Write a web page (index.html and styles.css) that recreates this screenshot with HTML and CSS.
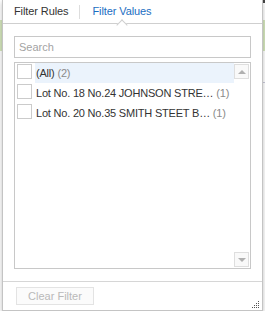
FILE: index.html
```html
<!DOCTYPE html>
<html lang="en">
  <head>
    <meta charset="UTF-8" />
    <meta name="viewport" content="width=device-width, initial-scale=1.0" />
    <title>Filter</title>
    <link rel="stylesheet" href="styles.css">
  </head>
  <body>
    <div class="filter-popup">
      <div class="filter-tabs">
        <span class="tab">Filter Rules</span>
        <span class="tab-divider"></span>
        <span class="tab tab-active">Filter Values<span class="tab-caret"></span></span>
      </div>
      <div class="filter-body">
        <input class="search-box" type="text" placeholder="Search" />
        <div class="value-list">
          <div class="value-rows">
            <div class="value-row">
              <span class="check"></span>
              <span class="value-label selected">(All) <span class="count">(2)</span></span>
            </div>
            <div class="value-row">
              <span class="check"></span>
              <span class="value-label">Lot No. 18 No.24 JOHNSON STRE… <span class="count">(1)</span></span>
            </div>
            <div class="value-row">
              <span class="check"></span>
              <span class="value-label">Lot No. 20 No.35 SMITH STEET B… <span class="count">(1)</span></span>
            </div>
          </div>
          <div class="scrollbar">
            <span class="scroll-btn"><span class="arrow-up"></span></span>
            <span class="scroll-btn"><span class="arrow-down"></span></span>
          </div>
        </div>
      </div>
      <div class="filter-footer">
        <button class="clear-btn" disabled>Clear Filter</button>
      </div>
      <svg class="grip" width="8" height="8" viewBox="0 0 8 8">
        <rect x="6" y="0" width="1" height="1" />
        <rect x="4" y="2" width="1" height="1" />
        <rect x="6" y="2" width="1" height="1" />
        <rect x="2" y="4" width="1" height="1" />
        <rect x="4" y="4" width="1" height="1" />
        <rect x="6" y="4" width="1" height="1" />
        <rect x="0" y="6" width="1" height="1" />
        <rect x="2" y="6" width="1" height="1" />
        <rect x="4" y="6" width="1" height="1" />
        <rect x="6" y="6" width="1" height="1" />
      </svg>
    </div>
  </body>
</html>
```

FILE: styles.css
```css
* {
  box-sizing: border-box;
  margin: 0;
  padding: 0;
}

body {
  font-family: "Liberation Sans", Arial, sans-serif;
  font-size: 11px;
  color: #333333;
  background:
    linear-gradient(#d5e7bd, #d5e7bd) right 0 top 20px / 3px 31px no-repeat,
    linear-gradient(#c9c9d9, #c9c9d9) right 0 top 82px / 3px 1px no-repeat,
    linear-gradient(#454545, #454545) right 0 top 0 / 7px 3px no-repeat,
    linear-gradient(#d5e7bd, #d5e7bd) left 0 top 20px / 2px 31px no-repeat,
    #ffffff;
}

.filter-popup {
  position: relative;
  width: 261px;
  height: 311px;
  margin-left: 2px;
  background: #ffffff;
  border: 1px solid #c4c4c4;
  border-top: none;
  box-shadow: 0 2px 5px rgba(0, 0, 0, 0.25);
  display: flex;
  flex-direction: column;
}

.filter-tabs {
  height: 24px;
  border-bottom: 1px solid #cfcfcf;
  display: flex;
  align-items: center;
  padding-left: 11px;
}

.tab {
  position: relative;
  line-height: 23px;
  color: #333333;
  letter-spacing: -0.1px;
}

.tab-active {
  color: #1b6ec2;
}

.tab-divider {
  width: 1px;
  height: 14px;
  background: #dddddd;
  margin: 0 12px 0 11px;
}

.tab-caret {
  position: absolute;
  top: 21px;
  left: calc(50% - 4px);
  width: 8px;
  height: 8px;
  background: #ffffff;
  border-left: 1px solid #cfcfcf;
  border-top: 1px solid #cfcfcf;
  transform: rotate(45deg);
}

.filter-body {
  padding: 12px 11px 0;
}

.search-box {
  display: block;
  width: 237px;
  height: 22px;
  padding: 0 4px;
  border: 1px solid #c8c8c8;
  font-family: inherit;
  font-size: 11px;
  color: #333333;
  outline: none;
}

.search-box::placeholder {
  color: #a3a3a3;
}

.value-list {
  margin-top: 4px;
  width: 237px;
  height: 207px;
  border: 1px solid #c8c8c8;
  display: flex;
}

.value-rows {
  flex: 1;
  min-width: 0;
}

.value-row {
  height: 20px;
  display: flex;
  align-items: flex-start;
}

.check {
  width: 15px;
  height: 15px;
  margin: 1px 3px 0 2px;
  border: 1px solid #cbcbcb;
  background: #ffffff;
  flex: none;
}

.value-label {
  flex: 1;
  line-height: 20px;
  padding-left: 1px;
  white-space: nowrap;
  letter-spacing: -0.2px;
}

.value-label.selected {
  background: #ebf3fc;
}

.count {
  color: #8a8a8a;
}

.scrollbar {
  width: 16px;
  flex: none;
  display: flex;
  flex-direction: column;
  justify-content: space-between;
  padding: 1px 1px 1px 0;
}

.scroll-btn {
  width: 15px;
  height: 15px;
  border: 1px solid #dedede;
  background: #f9f9f9;
  display: flex;
  align-items: center;
  justify-content: center;
}

.arrow-up,
.arrow-down {
  width: 0;
  height: 0;
  border-left: 4px solid transparent;
  border-right: 4px solid transparent;
}

.arrow-up {
  border-bottom: 4px solid #b0b0b0;
}

.arrow-down {
  border-top: 4px solid #b0b0b0;
}

.filter-footer {
  margin-top: 12px;
  height: 29px;
  border-top: 1px solid #d6d6d6;
  padding: 5px 0 0 13px;
}

.clear-btn {
  display: block;
  width: 78px;
  height: 18px;
  border: 1px solid #e3e3e3;
  background: #fbfbfb;
  color: #b9b9b9;
  font-family: inherit;
  font-size: 11px;
}

.grip {
  position: absolute;
  right: 2px;
  bottom: 1px;
  fill: #555555;
}
```
